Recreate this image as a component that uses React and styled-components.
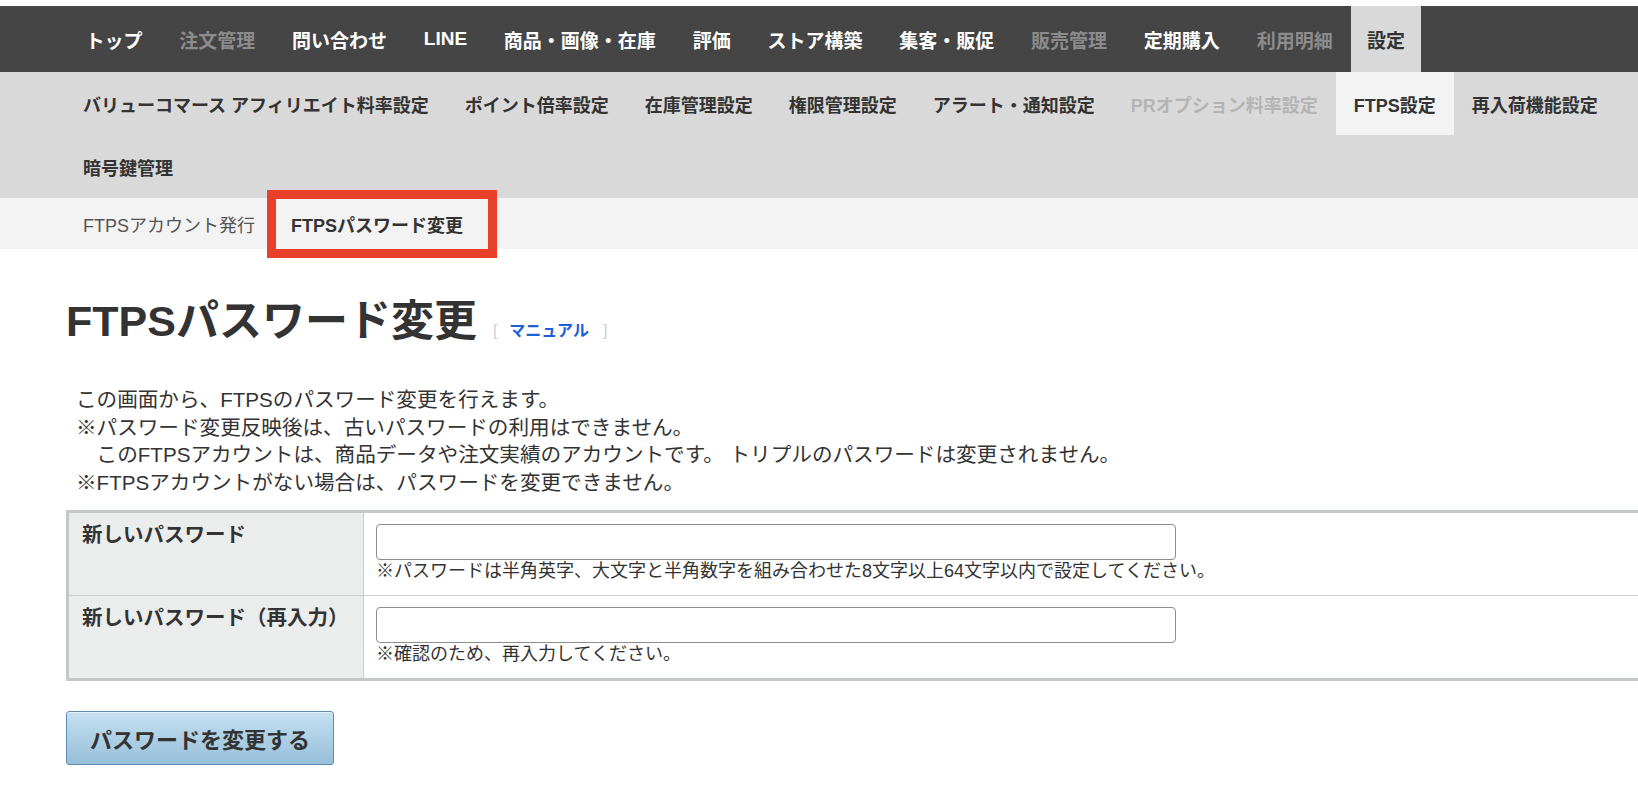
import React from 'react';
import styled, { createGlobalStyle, css } from 'styled-components';

const GlobalStyle = createGlobalStyle`
    * {
        box-sizing: border-box;
    }
    html, body {
        margin: 0;
        padding: 0;
        background: #fff;
        overflow-x: hidden;
    }
    body {
        font-family: "Liberation Sans", "Noto Sans CJK JP", sans-serif;
        color: #333;
    }
`;

const Page = styled.div`
    padding-top: 6px;
    min-height: 792px;
`;

// global navigation (dark bar)
const GlobalNav = styled.nav`
    display: flex;
    height: 66px;
    background: #454545;
    padding-left: 67px;
`;
const GlobalItem = styled.a`
    display: flex;
    align-items: center;
    padding: 0 ${props => props.$active ? '16px' : '18.4px'};
    font-size: 19px;
    font-weight: 700;
    white-space: nowrap;
    text-decoration: none;
    color: ${props => props.$active ? '#333' : props.$disabled ? '#8c8c8c' : '#fff'};
    background: ${props => props.$active ? '#d9d9d9' : 'transparent'};
`;

// second level navigation
const SubNav = styled.nav`
    display: flex;
    flex-wrap: wrap;
    background: #d9d9d9;
    padding-left: 65px;
`;
const SubItem = styled.a`
    display: flex;
    align-items: center;
    height: 63px;
    padding: 0 18px;
    font-size: 18px;
    font-weight: 700;
    white-space: nowrap;
    text-decoration: none;
    color: ${props => props.$disabled ? '#b4b4b4' : '#333'};
    background: ${props => props.$active ? '#f3f3f3' : 'transparent'};
`;

// third level tabs
const TabBar = styled.div`
    display: flex;
    height: 51px;
    background: #f3f3f3;
    padding-left: 65px;
`;
const Tab = styled.a`
    position: relative;
    display: flex;
    align-items: center;
    padding: 0 18px;
    font-size: 18px;
    white-space: nowrap;
    text-decoration: none;
    font-weight: ${props => props.$active ? 700 : 400};
    color: ${props => props.$active ? '#333' : '#555'};
    ${props => props.$marked && css`
        &::after {
            content: '';
            position: absolute;
            top: -8px;
            bottom: -9px;
            left: -6px;
            right: -16px;
            border: 9px solid #e8402a;
            pointer-events: none;
        }
    `}
`;

// main content
const Main = styled.main`
    padding: 47px 0 30px 66px;
    overflow: hidden;
`;
const TitleRow = styled.div`
    display: flex;
    align-items: baseline;
`;
const Title = styled.h1`
    margin: 0;
    font-size: 43px;
    line-height: 50px;
    font-weight: 700;
    color: #333;
`;
const Manual = styled.span`
    margin-left: 16px;
    font-size: 16px;
    color: #cfcfcf;
`;
const ManualLink = styled.a`
    margin: 0 14px 0 12px;
    color: #1d5fd6;
    font-weight: 700;
    text-decoration: none;
`;
const Lead = styled.p`
    margin: 40px 0 0 10px;
    font-size: 20.6px;
    line-height: 27.5px;
    color: #333;
`;

const FormTable = styled.table`
    margin-top: 14px;
    width: 1620px;
    border: 3px solid #c4c8c6;
    border-spacing: 0;
`;
const HeadCell = styled.th`
    width: 295px;
    padding: 9px 13px;
    text-align: left;
    vertical-align: top;
    font-size: 20.5px;
    line-height: 26px;
    font-weight: 700;
    color: #333;
    background: #ebedec;
    border-right: 1px solid #c8cccb;
    border-bottom: ${props => props.$last ? 'none' : '1px solid #c8cccb'};
`;
const DataCell = styled.td`
    padding: 11px 12px 13px;
    vertical-align: top;
    border-bottom: ${props => props.$last ? 'none' : '1px solid #c8cccb'};
`;
const PasswordInput = styled.input`
    display: block;
    width: 800px;
    height: 36px;
    margin: 0;
    padding: 4px 8px;
    font-size: 18px;
    border: 1px solid #8e8e8e;
    border-radius: 4px;
    background: #fff;
`;
const Hint = styled.div`
    font-size: 18px;
    line-height: 22px;
    color: #333;
`;

const SubmitButton = styled.button`
    display: block;
    margin-top: 30px;
    height: 54px;
    padding: 0 23px;
    font-family: "Liberation Sans", "Noto Sans CJK JP", sans-serif;
    font-size: 22px;
    font-weight: 700;
    color: #333;
    background: linear-gradient(#c5e0f1, #97bfd9);
    border: 1px solid #5f8cb2;
    border-radius: 3px;
    box-shadow: inset 0 1px 0 rgba(255,255,255,.55);
`;

const globalItems = [
    { label: 'トップ' },
    { label: '注文管理', disabled: true },
    { label: '問い合わせ' },
    { label: 'LINE' },
    { label: '商品・画像・在庫' },
    { label: '評価' },
    { label: 'ストア構築' },
    { label: '集客・販促' },
    { label: '販売管理', disabled: true },
    { label: '定期購入' },
    { label: '利用明細', disabled: true },
    { label: '設定', active: true },
];

const subItems = [
    { label: 'バリューコマース アフィリエイト料率設定' },
    { label: 'ポイント倍率設定' },
    { label: '在庫管理設定' },
    { label: '権限管理設定' },
    { label: 'アラート・通知設定' },
    { label: 'PRオプション料率設定', disabled: true },
    { label: 'FTPS設定', active: true },
    { label: '再入荷機能設定' },
    { label: '暗号鍵管理' },
];

const App = () => {
    return (
        <Page>
            <GlobalStyle />
            <GlobalNav>
                {globalItems.map(item => (
                    <GlobalItem key={item.label} $active={item.active} $disabled={item.disabled}>
                        {item.label}
                    </GlobalItem>
                ))}
            </GlobalNav>
            <SubNav>
                {subItems.map(item => (
                    <SubItem key={item.label} $active={item.active} $disabled={item.disabled}>
                        {item.label}
                    </SubItem>
                ))}
            </SubNav>
            <TabBar>
                <Tab>FTPSアカウント発行</Tab>
                <Tab $active $marked>FTPSパスワード変更</Tab>
            </TabBar>
            <Main>
                <TitleRow>
                    <Title>FTPSパスワード変更</Title>
                    <Manual>
                        [<ManualLink>マニュアル</ManualLink>]
                    </Manual>
                </TitleRow>
                <Lead>
                    この画面から、FTPSのパスワード変更を行えます。<br />
                    ※パスワード変更反映後は、古いパスワードの利用はできません。<br />
                    {'\u3000'}このFTPSアカウントは、商品データや注文実績のアカウントです。 トリプルのパスワードは変更されません。<br />
                    ※FTPSアカウントがない場合は、パスワードを変更できません。
                </Lead>
                <FormTable>
                    <tbody>
                        <tr>
                            <HeadCell>新しいパスワード</HeadCell>
                            <DataCell>
                                <PasswordInput type="password" />
                                <Hint>※パスワードは半角英字、大文字と半角数字を組み合わせた8文字以上64文字以内で設定してください。</Hint>
                            </DataCell>
                        </tr>
                        <tr>
                            <HeadCell $last>新しいパスワード（再入力）</HeadCell>
                            <DataCell $last>
                                <PasswordInput type="password" />
                                <Hint>※確認のため、再入力してください。</Hint>
                            </DataCell>
                        </tr>
                    </tbody>
                </FormTable>
                <SubmitButton type="button">パスワードを変更する</SubmitButton>
            </Main>
        </Page>
    );
};

export default App;
